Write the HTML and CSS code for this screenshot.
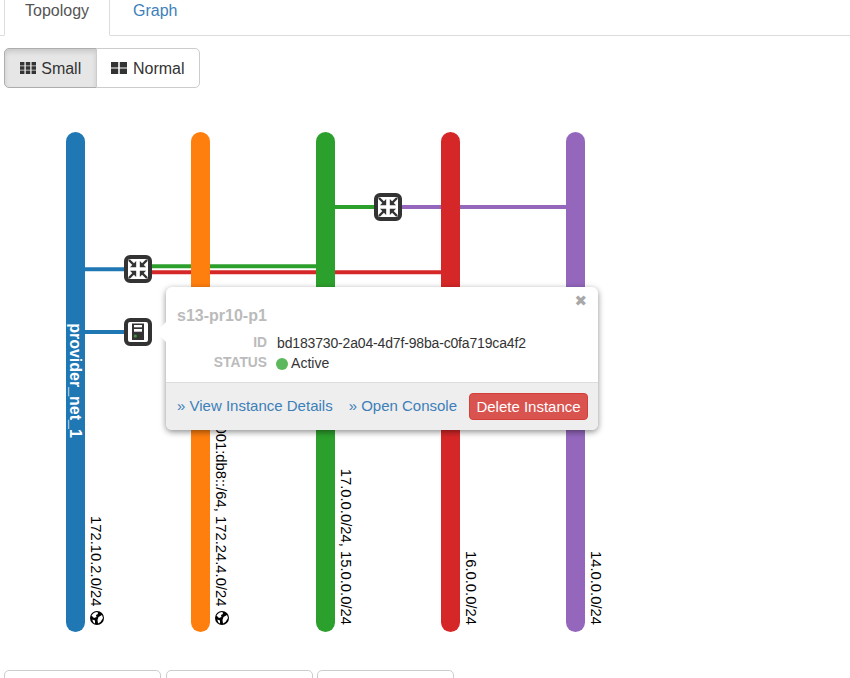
FILE: index.html
```html
<!DOCTYPE html>
<html lang="en">
<head>
  <meta charset="UTF-8">
  <title>Network Topology</title>
  <link rel="stylesheet" href="styles.css">
</head>
<body>

  <ul class="tabs">
    <li class="tab active">Topology</li>
    <li class="tab"><a href="#">Graph</a></li>
  </ul>

  <div class="btn-group">
    <button class="btn active">
      <svg class="btn-icon" viewBox="0 0 16 14"><path d="M0 1h4.4v3.4H0zM5.8 1h4.4v3.4H5.8zM11.6 1H16v3.4h-4.4zM0 5.3h4.4v3.4H0zM5.8 5.3h4.4v3.4H5.8zM11.6 5.3H16v3.4h-4.4zM0 9.6h4.4V13H0zM5.8 9.6h4.4V13H5.8zM11.6 9.6H16V13h-4.4z"/></svg>
      Small
    </button>
    <button class="btn">
      <svg class="btn-icon" viewBox="0 0 16 14"><path d="M0 1h7.2v5.4H0zM8.8 1H16v5.4H8.8zM0 7.6h7.2V13H0zM8.8 7.6H16V13H8.8z"/></svg>
      Normal
    </button>
  </div>

  <div class="canvas">
    <svg class="topology" width="850" height="570" viewBox="0 0 850 570">
      <defs>
        <g id="arrow">
          <path class="arrow-line" d="M-9 -9L-4.500 -4.500"/>
          <path class="arrow-head" d="M-1.800 -1.800V-8L-8 -1.800z"/>
        </g>
        <g id="router">
          <rect class="device" x="-12" y="-12" width="24" height="24" rx="4"/>
          <use href="#arrow"/>
          <use href="#arrow" transform="rotate(90)"/>
          <use href="#arrow" transform="rotate(180)"/>
          <use href="#arrow" transform="rotate(270)"/>
        </g>
        <g id="instance">
          <rect class="device" x="-12" y="-12" width="24" height="24" rx="4"/>
          <rect class="server" x="-6" y="-8.500" width="12" height="16.500"/>
          <rect class="slot" x="-4" y="-7" width="8" height="2.300"/>
          <rect class="slot" x="-4" y="-3" width="8" height="2.700"/>
          <circle class="led" cx="-2.700" cy="4" r="1.600"/>
        </g>
        <g id="globe">
          <circle r="7" fill="#000"/>
          <path fill="#fff" d="M-5.500 -2.500C-4 -5 -1.500 -6 .5 -6L1 -4L-1 -3L-.5 -1L-3 0zM1.500 -1L5 -3L6 0L3.500 4L1 5.500L.5 2zM-4.500 1.500L-2 2.500L-2 5.500C-3.500 5 -4.500 3.500 -4.500 1.500z"/>
        </g>
      </defs>

      <!-- links, drawn under the nets -->
      <path class="link blue" d="M85 181.300H138"/>
      <path class="link green" d="M138 178.300H316"/>
      <path class="link red" d="M138 184.300H441"/>
      <path class="link blue" d="M85 244H138"/>
      <path class="link green" d="M335 119H388"/>
      <path class="link purple" d="M388 119H566"/>

      <!-- nets -->
      <rect class="net blue-fill" x="66" y="44" width="19" height="500" rx="9.500"/>
      <rect class="net orange-fill" x="191" y="44" width="19" height="500" rx="9.500"/>
      <rect class="net green-fill" x="316" y="44" width="19" height="500" rx="9.500"/>
      <rect class="net red-fill" x="441" y="44" width="19" height="500" rx="9.500"/>
      <rect class="net purple-fill" x="566" y="44" width="19" height="500" rx="9.500"/>

      <text class="net-name" transform="translate(70,292.500) rotate(90)" text-anchor="middle">provider_net_1</text>

      <text class="cidr" transform="translate(91,518.500) rotate(90)" text-anchor="end">172.10.2.0/24</text>
      <use href="#globe" x="97" y="530"/>
      <text class="cidr" transform="translate(216,518.500) rotate(90)" text-anchor="end">2001:db8::/64, 172.24.4.0/24</text>
      <use href="#globe" x="222" y="530"/>
      <text class="cidr" transform="translate(341,537) rotate(90)" text-anchor="end">17.0.0.0/24, 15.0.0.0/24</text>
      <text class="cidr" transform="translate(466,537) rotate(90)" text-anchor="end">16.0.0.0/24</text>
      <text class="cidr" transform="translate(591,537) rotate(90)" text-anchor="end">14.0.0.0/24</text>

      <use href="#router" x="138" y="181"/>
      <use href="#instance" x="138" y="244"/>
      <use href="#router" x="388" y="119"/>
    </svg>

    <div class="popover">
      <span class="popover-arrow"></span>
      <span class="popover-close">&#10006;</span>
      <div class="popover-body">
        <h4 class="popover-title">s13-pr10-p1</h4>
        <dl class="details">
          <dt>ID</dt>
          <dd class="uuid">bd183730-2a04-4d7f-98ba-c0fa719ca4f2</dd>
          <dt>STATUS</dt>
          <dd class="status"><span class="status-dot"></span> Active</dd>
        </dl>
      </div>
      <div class="popover-footer">
        <a href="#">» View Instance Details</a>
        <a href="#">» Open Console</a>
        <button class="btn-danger">Delete Instance</button>
      </div>
    </div>
  </div>

  <div class="actions">
    <button class="btn action-1"></button>
    <button class="btn action-2"></button>
    <button class="btn action-3"></button>
  </div>

</body>
</html>
```

FILE: styles.css
```css
html, body {
  height: 678px;
  overflow: hidden;
}

body {
  margin: 0;
  background: #fff;
  font-family: "Liberation Sans", Arial, sans-serif;
  font-size: 14px;
  color: #333;
}

a {
  color: #3d7fb9;
  text-decoration: none;
}

.tabs {
  display: flex;
  height: 35px;
  margin: 0;
  padding: 0 0 0 4px;
  list-style: none;
  border-bottom: 1px solid #ddd;
  font-size: 16px;
  line-height: 20px;
}

.tab {
  height: 36px;
  padding: 1px 20px 0;
  margin-right: 2px;
  box-sizing: border-box;
  border: 1px solid transparent;
  border-top: none;
}

.tab.active {
  background: #fff;
  color: #555;
  border-color: #ddd;
  border-bottom-color: #fff;
}

.btn-group {
  display: flex;
  margin: 12px 0 0 4px;
}

.btn {
  height: 40px;
  padding: 1px 0 0;
  background: #fff;
  border: 1px solid #ccc;
  font-family: inherit;
  font-size: 16px;
  color: #333;
  white-space: nowrap;
}

.btn-group .btn:first-child {
  width: 93px;
  border-radius: 5px 0 0 5px;
}

.btn-group .btn:last-child {
  width: 104px;
  margin-left: -1px;
  border-radius: 0 5px 5px 0;
}

.btn.active {
  background: #e6e6e6;
  border-color: #adadad;
  box-shadow: inset 0 3px 5px rgba(0,0,0,0.125);
}

.btn-icon {
  width: 16px;
  height: 14px;
  margin-right: 1px;
  vertical-align: -1px;
  fill: #333;
}

.canvas {
  position: relative;
  height: 582px;
}

.topology {
  display: block;
}

.link {
  fill: none;
  stroke-width: 4;
}

.blue { stroke: #1f77b4; }
.green { stroke: #2ca02c; }
.red { stroke: #d62728; }
.purple { stroke: #9467bd; }

.blue-fill { fill: #1f77b4; }
.orange-fill { fill: #ff7f0e; }
.green-fill { fill: #2ca02c; }
.red-fill { fill: #d62728; }
.purple-fill { fill: #9467bd; }

.net-name {
  font-size: 16px;
  font-weight: bold;
  fill: #fff;
}

.cidr {
  font-size: 14.8px;
  fill: #000;
}

.device {
  fill: #fff;
  stroke: #333;
  stroke-width: 4;
}

.arrow-line {
  stroke: #333;
  stroke-width: 2.4;
}

.arrow-head,
.server {
  fill: #333;
}

.slot {
  fill: #fff;
}

.led {
  fill: #3c9a3c;
}

.popover {
  position: absolute;
  left: 166px;
  top: 199px;
  width: 432px;
  height: 143px;
  display: flex;
  flex-direction: column;
  background: #fff;
  border-radius: 6px;
  box-shadow: 0 2px 6px rgba(0,0,0,0.45);
}

.popover-arrow {
  position: absolute;
  left: -7px;
  top: 38px;
  width: 14px;
  height: 14px;
  background: #fff;
  transform: rotate(45deg);
}

.popover-close {
  position: absolute;
  right: 11px;
  top: 5px;
  font-family: "DejaVu Sans", sans-serif;
  font-size: 15px;
  color: #a8a8a8;
}

.popover-body {
  position: relative;
  flex: 1;
  padding: 19px 11px 0;
}

.popover-title {
  margin: 0;
  font-size: 16px;
  line-height: 20px;
  color: #bbb;
}

.details {
  display: grid;
  grid-template-columns: 90px 1fr;
  column-gap: 10px;
  margin: 7px 0 0;
  line-height: 20px;
}

.details dt {
  font-size: 13.8px;
  font-weight: bold;
  text-align: right;
  color: #bbb;
}

.details dd {
  margin: 0;
  color: #333;
}

.details .status {
  margin-left: -1px;
}

.uuid {
  letter-spacing: -0.16px;
}

.status-dot {
  display: inline-block;
  width: 12px;
  height: 12px;
  border-radius: 50%;
  background: #5cb85c;
  vertical-align: -2px;
}

.popover-footer {
  position: relative;
  display: flex;
  align-items: center;
  height: 47px;
  padding: 0 10px 0 11px;
  background: #eee;
  border-top: 1px solid #ddd;
  border-radius: 0 0 6px 6px;
  font-size: 15px;
}

.popover-footer a {
  margin-bottom: 2px;
}

.popover-footer a:nth-child(2) {
  margin-left: 16px;
}

.btn-danger {
  margin-left: auto;
  width: 119px;
  height: 27px;
  padding: 0;
  background: #d9534f;
  border: 1px solid #d43f3a;
  border-radius: 4px;
  font-family: inherit;
  font-size: 15px;
  color: #fff;
}

.actions {
  display: flex;
  gap: 5px;
  margin-left: 4px;
}

.actions .btn {
  height: 40px;
  border-radius: 5px;
}

.action-1 { width: 157px; }
.action-2 { width: 147px; }
.action-3 { width: 137px; margin-left: -1px; }
```
